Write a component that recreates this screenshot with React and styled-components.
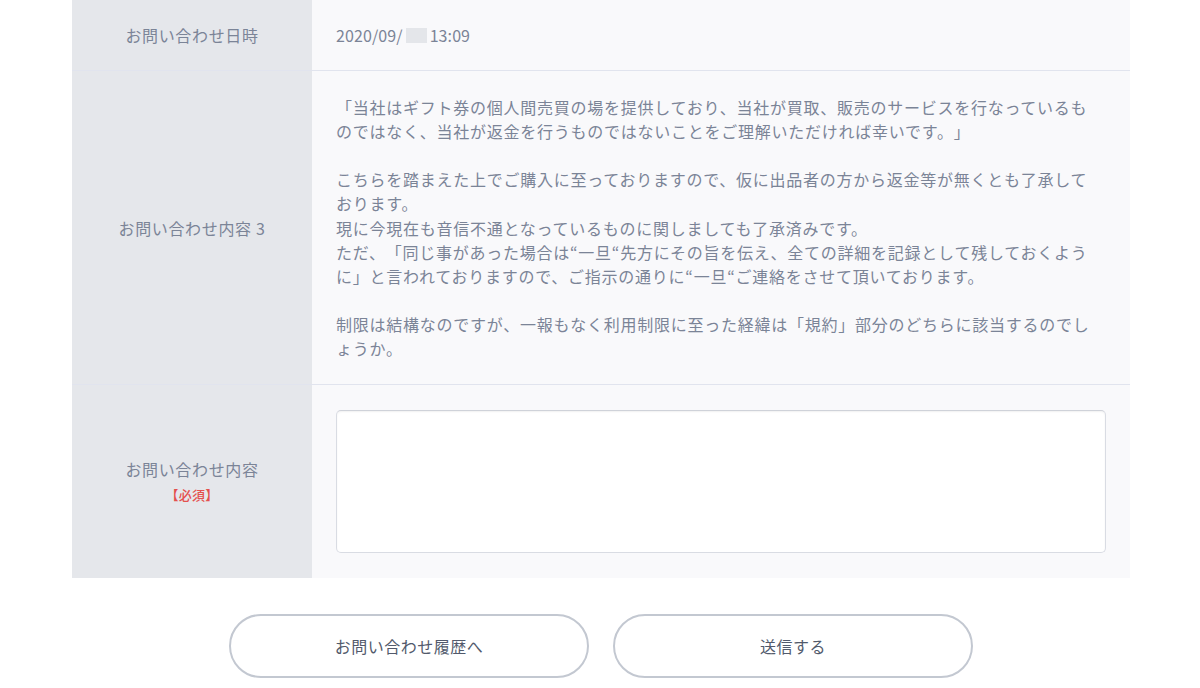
import React from 'react';
import styled, { createGlobalStyle } from 'styled-components';

const GlobalStyle = createGlobalStyle`
  html, body {
    margin: 0;
    padding: 0;
    background: #ffffff;
  }
  body {
    font-family: "Noto Sans CJK JP", "Noto Sans", sans-serif;
    color: #7b8497;
    text-spacing-trim: space-all;
  }
`;

const Page = styled.div`
  width: 1200px;
  height: 688px;
  overflow: hidden;
  display: flex;
  flex-direction: column;
  align-items: center;
`;

const Table = styled.div`
  width: 1058px;
  margin-left: 2px;
  display: flex;
  flex-direction: column;
`;

const Row = styled.div`
  display: grid;
  grid-template-columns: 240px 1fr;
  border-bottom: ${(p) => (p.$last ? 'none' : '1px solid #e1e4ee')};
`;

const Label = styled.div`
  background: #e5e7eb;
  display: flex;
  flex-direction: column;
  align-items: center;
  justify-content: center;
  font-size: 16px;
  letter-spacing: 0.04em;
  line-height: 24px;
  color: #7b8497;
`;

const Required = styled.span`
  color: #e4504e;
  font-size: 13px;
  font-weight: 500;
  letter-spacing: 0.02em;
  margin-top: 2px;
`;

const Value = styled.div`
  background: #f9f9fb;
  padding: ${(p) => p.$pad || '24px'};
  font-size: 16px;
  line-height: 24.1px;
  letter-spacing: ${(p) => p.$spacing || '0.75px'};
  color: #7b8497;
  white-space: pre-wrap;
  word-break: break-all;
  text-spacing-trim: space-all;
`;

const Blur = styled.span`
  display: inline-block;
  width: 21px;
  height: 15px;
  background: #e4e6ea;
  vertical-align: -1px;
  margin: 0 3px 0 3px;
`;

const TextArea = styled.textarea`
  display: block;
  box-sizing: border-box;
  width: 100%;
  height: 143px;
  resize: none;
  border: 1px solid #d9dce3;
  border-top-color: #cfd2d9;
  border-radius: 5px;
  background: #ffffff;
  box-shadow: inset 0 1px 2px rgba(0, 0, 0, 0.06);
  outline: none;
`;

const Buttons = styled.div`
  display: flex;
  gap: 24px;
  margin-top: 36px;
  margin-left: 2px;
`;

const Button = styled.button`
  width: 360px;
  height: 64px;
  border-radius: 32px;
  border: 2px solid #c3c8d1;
  background: #ffffff;
  font-family: "Noto Sans CJK JP", "Noto Sans", sans-serif;
  font-size: 16px;
  letter-spacing: 0.03em;
  color: #525a6c;
  cursor: pointer;
`;

const message = `「当社はギフト券の個人間売買の場を提供しており、当社が買取、販売のサービスを行なっているものではなく、当社が返金を行うものではないことをご理解いただければ幸いです。」

こちらを踏まえた上でご購入に至っておりますので、仮に出品者の方から返金等が無くとも了承しております。
現に今現在も音信不通となっているものに関しましても了承済みです。
ただ、「同じ事があった場合は“一旦“先方にその旨を伝え、全ての詳細を記録として残しておくように」と言われておりますので、ご指示の通りに“一旦“ご連絡をさせて頂いております。

制限は結構なのですが、一報もなく利用制限に至った経緯は「規約」部分のどちらに該当するのでしょうか。`;

export default function App() {
  return (
    <Page>
      <GlobalStyle />
      <Table>
        <Row>
          <Label>お問い合わせ日時</Label>
          <Value $pad="23px 24px" $spacing="0.1px">
            2020/09/<Blur />13:09
          </Value>
        </Row>
        <Row>
          <Label>お問い合わせ内容 3</Label>
          <Value $pad="24px 34px 24px 24px">{message}</Value>
        </Row>
        <Row $last>
          <Label>
            お問い合わせ内容
            <Required>【必須】</Required>
          </Label>
          <Value $pad="25px 24px 25px">
            <TextArea />
          </Value>
        </Row>
      </Table>
      <Buttons>
        <Button>お問い合わせ履歴へ</Button>
        <Button>送信する</Button>
      </Buttons>
    </Page>
  );
}
